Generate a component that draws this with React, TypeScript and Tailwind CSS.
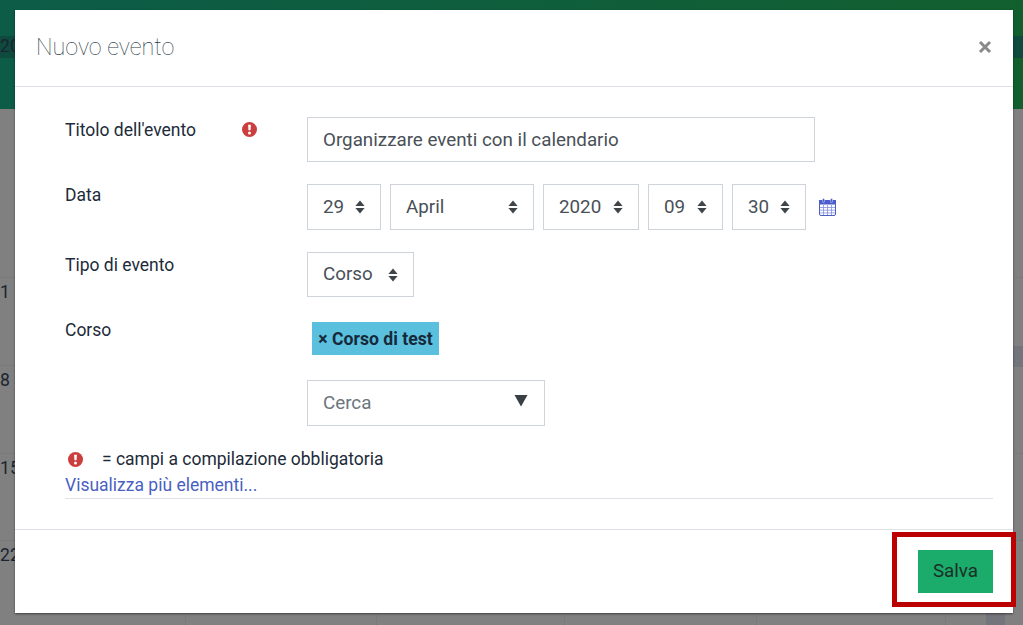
import React from "react";

const Req = ({ className = "" }: { className?: string }) => (
  <svg viewBox="0 0 14 14" className={`w-[15px] h-[15px] ${className}`}>
    <circle cx="7" cy="7" r="7" fill="#cc3d3d" />
    <path d="M5.7 2.6h2.6l-.35 5.2H6.05z" fill="#fff" />
    <circle cx="7" cy="10.2" r="1.4" fill="#fff" />
  </svg>
);

const Carets = () => (
  <svg viewBox="0 0 10 14" className="w-[10px] h-[14px] shrink-0">
    <path d="M5 .6l4.6 5.4H.4z" fill="#3f4448" />
    <path d="M5 13.4L.4 8h9.2z" fill="#3f4448" />
  </svg>
);

const Sel = ({ label, w, h = "h-[46px]" }: { label: string; w: string; h?: string }) => (
  <div className={`${w} ${h} border border-[#ced4da] flex items-center justify-between pl-[15px] pr-[15px] text-[18.8px] text-[#495057] bg-white`}>
    <span>{label}</span>
    <Carets />
  </div>
);

const CalIcon = () => (
  <svg viewBox="0 0 17 18" className="w-[17px] h-[18px]">
    <rect x="0.5" y="2.5" width="16" height="15" rx="1.5" fill="#fff" stroke="#4a5ecb" />
    <rect x="0.5" y="2.5" width="16" height="3.5" fill="#4a5ecb" stroke="#4a5ecb" />
    <rect x="3.5" y="0.5" width="2" height="4" rx="1" fill="#4a5ecb" stroke="#fff" strokeWidth="0.4" />
    <rect x="11.5" y="0.5" width="2" height="4" rx="1" fill="#4a5ecb" stroke="#fff" strokeWidth="0.4" />
    <path d="M1 9.5h15M1 12.2h15M1 14.9h15M4.5 7v10M8.5 7v10M12.5 7v10" stroke="#8391de" strokeWidth="0.8" />
  </svg>
);

const Row = ({ n, h }: { n: string; h: string }) => (
  <div className={`${h} border-b border-dotted border-[#737373] text-[17.6px] text-[#1b2530] leading-none pt-[6px]`}>
    <span>{n}</span>
  </div>
);

export default function App() {
  return (
    <div className="relative w-[1023px] h-[625px] overflow-hidden bg-[#808080]" style={{ fontFamily: "Roboto, 'Liberation Sans', sans-serif" }}>
      <div className="h-[109px] bg-gradient-to-r from-[#0c5c48] to-[#125f2e] flex flex-col text-[17.6px] text-[#1b2530]">
        <div className="mt-[36px] h-[22px] bg-[#0f4a3e] leading-[20px]">20</div>
      </div>
      <div className="h-[516px] flex flex-col pt-[140px]">
        <div className="h-[29px] border-b border-dotted border-[#737373]" />
        <Row n="1" h="h-[88px]" />
        <Row n="8" h="h-[88px]" />
        <Row n="15" h="h-[87px]" />
        <div className="flex-1 flex">
          <div className="w-[186px] border-r border-dotted border-[#737373] text-[17.6px] text-[#1b2530] leading-none pt-[6px]">22</div>
          <div className="w-[191px] border-r border-dotted border-[#737373]" />
          <div className="w-[188px] border-r border-dotted border-[#737373]" />
          <div className="w-[192px] border-r border-dotted border-[#737373]" />
          <div className="w-[189px] border-r border-dotted border-[#737373]" />
          <div className="w-[40px]" />
          <div className="w-[19px] bg-[#74747c]" />
        </div>
      </div>
      <div className="absolute left-[1013px] top-[346px] w-[10px] h-[21px] bg-[#74747c]" />

      <div className="absolute left-[15px] top-[10px] w-[998px] h-[603px] bg-white flex flex-col shadow-[0_1px_2px_rgba(0,0,0,0.5)]">
        <div className="h-[77px] shrink-0 border-b border-[#dee2e6] flex items-center justify-between pl-[21px] pr-[21px]">
          <span className="text-[23.3px] text-[#2b3a47] -mt-[1px]" style={{ fontWeight: 100 }}>Nuovo evento</span>
          <svg viewBox="0 0 14 14" className="w-[14px] h-[14px] -mt-[2px]">
            <path d="M2 2l10 10M12 2L2 12" stroke="#8a8a8a" strokeWidth="3" />
          </svg>
        </div>

        <div className="flex-1 pl-[50px] pr-[20px] pt-[30px] text-[17.5px] text-[#1d2b3a] flex flex-col">
          <div className="flex h-[45px] mb-[22px]">
            <div className="w-[242px] flex justify-between pr-[50px]">
              <span className="leading-[26px]">Titolo dell'evento</span>
              <Req className="mt-[5px]" />
            </div>
            <div className="w-[508px] h-[45px] border border-[#ced4da] flex items-center pl-[15px] pt-[1px] text-[18.8px] text-[#495057]">
              <span>Organizzare eventi con il calendario</span>
            </div>
          </div>

          <div className="flex h-[46px] mb-[22px]">
            <div className="w-[242px] leading-[24px] -mt-[1px]">Data</div>
            <div className="flex items-center gap-[9px]">
              <Sel label="29" w="w-[74px]" />
              <Sel label="April" w="w-[144px]" />
              <Sel label="2020" w="w-[96px]" />
              <Sel label="09" w="w-[75px]" />
              <Sel label="30" w="w-[74px]" />
              <div className="ml-[4px]"><CalIcon /></div>
            </div>
          </div>

          <div className="flex h-[45px] mb-[25px]">
            <div className="w-[242px] leading-[26px]">Tipo di evento</div>
            <Sel label="Corso" w="w-[107px]" h="h-[45px]" />
          </div>

          <div className="flex">
            <div className="w-[242px] leading-[24px] -mt-[4px]">Corso</div>
            <div className="flex flex-col">
              <span className="ml-[5px] w-[127px] h-[33px] bg-[#5bc0de] flex items-center justify-center text-[17.6px] font-bold text-[#16293b] whitespace-nowrap pt-[1px]">× Corso di test</span>
              <div className="mt-[25px] w-[238px] h-[46px] border border-[#ced4da] flex items-center justify-between pl-[15px] pr-[16px] text-[18.8px] text-[#6c757d]">
                <span>Cerca</span>
                <svg viewBox="0 0 14 12" className="w-[14px] h-[13px] mb-[6px]"><path d="M0.5 0.5h13L7 12z" fill="#3a3f44" /></svg>
              </div>
            </div>
          </div>

          <div className="mt-[21px] flex items-center h-[24px]">
            <Req className="ml-[3px]" />
            <span className="ml-[19px]">= campi a compilazione obbligatoria</span>
          </div>
          <div className="h-[28px] border-b border-[#dee2e6] text-[#4a5fc1] leading-[28px]">Visualizza più elementi...</div>
        </div>

        <div className="h-[84px] shrink-0 border-t border-[#dee2e6] flex justify-end items-start pt-[20px] pr-[20px]">
          <button className="w-[75px] h-[43px] bg-[#1bab6a] text-[#1a2f28] text-[18.8px]">Salva</button>
        </div>
      </div>

      <div className="absolute left-[892px] top-[532px] w-[124px] h-[75px] border-[5px] border-[#bb0000]" />
    </div>
  );
}
